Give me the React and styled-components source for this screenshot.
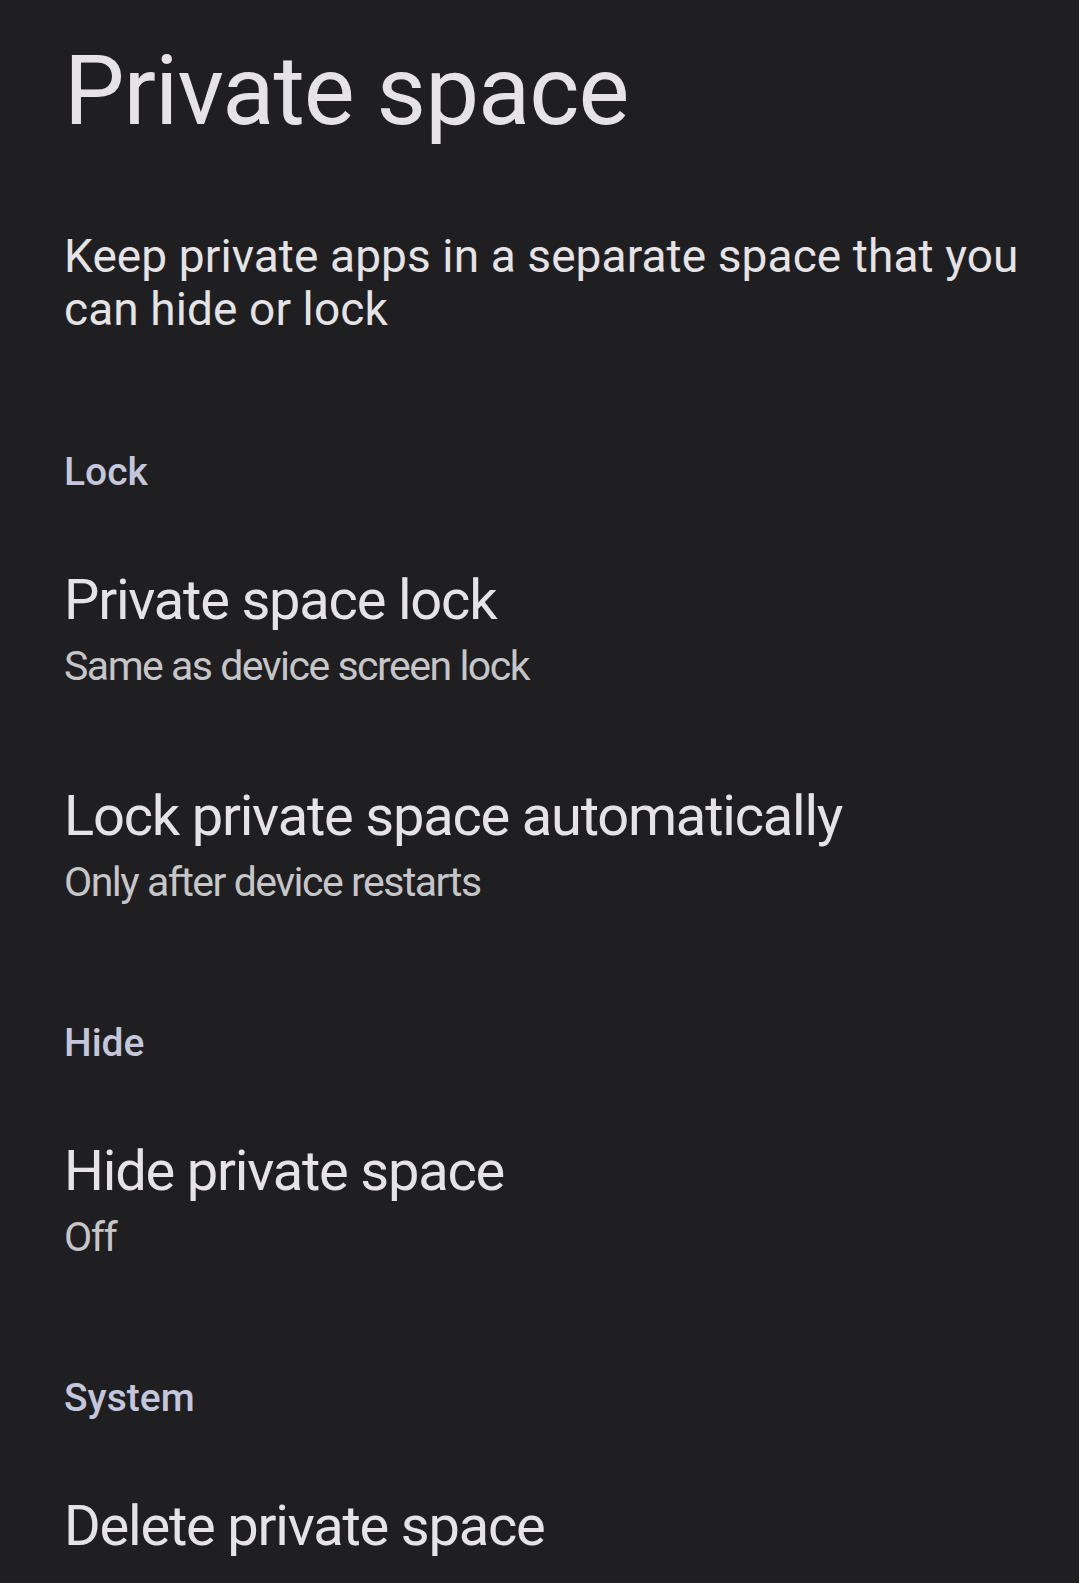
import React from 'react';
import styled, { createGlobalStyle } from 'styled-components';

const GlobalStyle = createGlobalStyle`
  html, body {
    margin: 0;
    padding: 0;
    background: #1f1f21;
  }
  body {
    font-family: Roboto, "Noto Sans", sans-serif;
    -webkit-font-smoothing: antialiased;
  }
`;

const sections = [
  {
    name: 'Lock',
    items: [
      { title: 'Private space lock', summary: 'Same as device screen lock' },
      { title: 'Lock private space automatically', summary: 'Only after device restarts' },
    ],
  },
  {
    name: 'Hide',
    items: [{ title: 'Hide private space', summary: 'Off' }],
  },
  {
    name: 'System',
    items: [{ title: 'Delete private space' }],
  },
];

const App = () => {
  return (
    <StyledPage>
      <GlobalStyle />
      <Title>Private space</Title>
      <Description>Keep private apps in a separate space that you can hide or lock</Description>
      {sections.map((section) => (
        <Section key={section.name}>
          <SectionHeader>{section.name}</SectionHeader>
          <ItemList>
            {section.items.map((item) => (
              <Item key={item.title}>
                <ItemTitle>{item.title}</ItemTitle>
                {item.summary && <ItemSummary>{item.summary}</ItemSummary>}
              </Item>
            ))}
          </ItemList>
        </Section>
      ))}
    </StyledPage>
  );
};

const StyledPage = styled.div`
  min-height: 1583px;
  box-sizing: border-box;
  padding: 36px 30px 0 64px;
  background: #1f1f21;
  overflow: hidden;
`;

const Title = styled.h1`
  margin: 0;
  font-size: 96px;
  line-height: 110px;
  font-weight: 400;
  letter-spacing: -1px;
  color: #e5e3e6;
`;

const Description = styled.p`
  margin: 84px 0 0;
  max-width: 985px;
  font-size: 46px;
  line-height: 53px;
  letter-spacing: 0.1px;
  color: #e5e3e6;
`;

const Section = styled.section`
  padding-top: 112px;
`;

const SectionHeader = styled.h2`
  margin: 0 0 71px;
  font-size: 39px;
  line-height: 48px;
  font-weight: 500;
  color: #c4c6db;
`;

const ItemList = styled.div`
  display: flex;
  flex-direction: column;
  gap: 92px;
`;

const Item = styled.div`
  display: flex;
  flex-direction: column;
  gap: 8px;
`;

const ItemTitle = styled.div`
  font-size: 56px;
  line-height: 66px;
  letter-spacing: -1.2px;
  color: #e5e3e6;
`;

const ItemSummary = styled.div`
  font-size: 41px;
  line-height: 50px;
  letter-spacing: -1.5px;
  color: #c6c6c8;
`;

export default App;
